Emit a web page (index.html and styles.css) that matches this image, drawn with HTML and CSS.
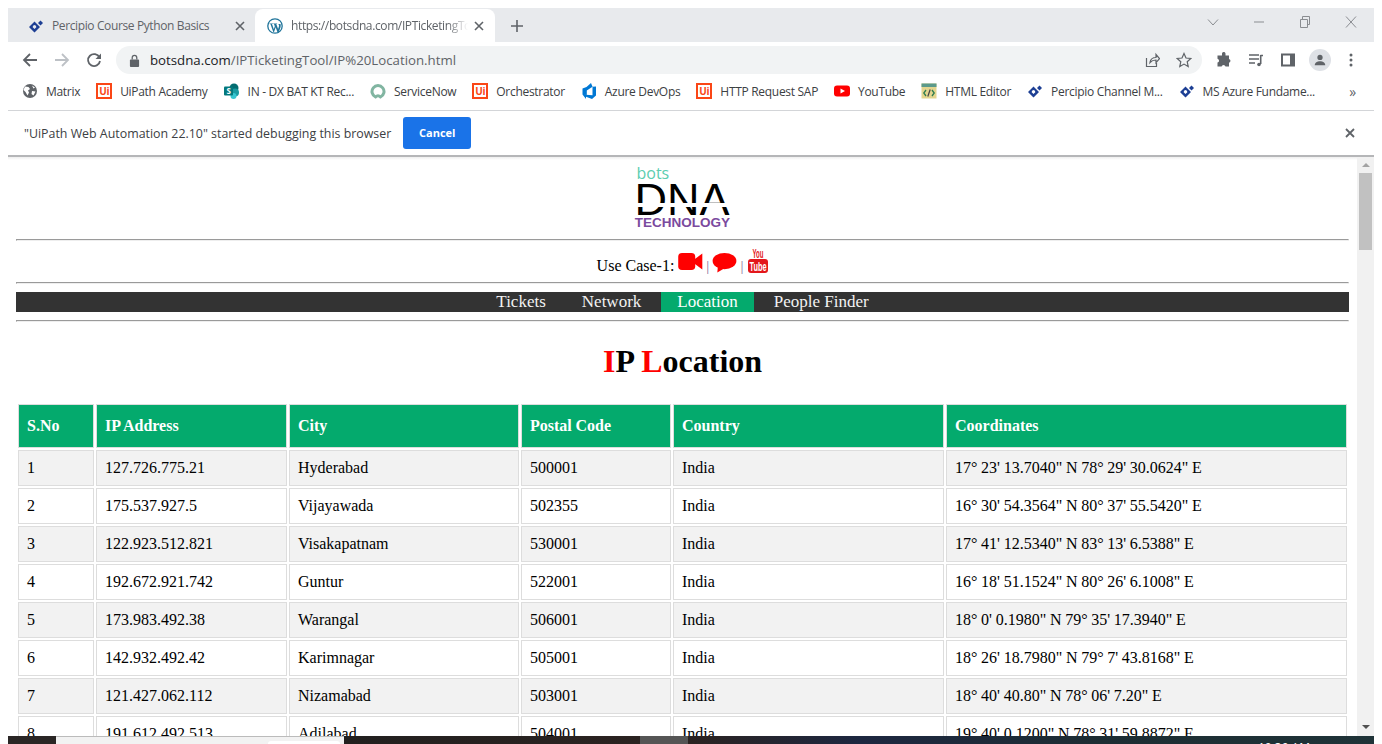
FILE: index.html
```html
<!DOCTYPE html>
<html lang="en">
<head>
    <meta charset="UTF-8">
    <title>IP Location</title>
    <link rel="stylesheet" href="styles.css">
</head>
<body>

<div class="window">

    <!-- browser tabs -->
    <div class="tabstrip">
        <div class="tab">
            <svg class="icon" viewBox="0 0 16 16"><path fill="#1d3f94" d="M6.500 3.500 12 9l-5.500 5.500L1 9zM6.500 7a2 2 0 0 0-1.800 2.200L6.500 11l1.800-1.800A2 2 0 0 0 6.500 7z"/><path fill="#1d3f94" d="M12.500 2.500 15 5l-2.500 2.500L10 5z"/></svg>
            <span class="tab-title">Percipio Course Python Basics</span>
            <svg class="tab-close" viewBox="0 0 10 10"><path d="M1 1l8 8M9 1l-8 8"/></svg>
        </div>
        <div class="tab tab-active">
            <svg class="icon" viewBox="0 0 16 16"><circle cx="8" cy="8" r="7.200" fill="none" stroke="#21759b" stroke-width="1.300"/><path fill="#21759b" d="M2.500 5.500h3.400v.5l-.9.100 1.800 5.100 1-3-.8-2.100-.7-.1v-.5h3.800v.5l-.8.100 1.800 5 .8-2.500c.4-1.300-.2-2-.6-2.600h2.200c.5 1.800.2 3-.4 4.600l-1.700 4.300h-.7L8.700 9.300 7 14.100h-.7L3.400 6.100l-.9-.100z"/></svg>
            <span class="tab-title tab-fade">https://botsdna.com/IPTicketingTool/IP%20Location.html</span>
            <svg class="tab-close" viewBox="0 0 10 10"><path d="M1 1l8 8M9 1l-8 8"/></svg>
        </div>
        <svg class="new-tab" viewBox="0 0 14 14"><path d="M7 1v12M1 7h12"/></svg>
        <div class="window-controls">
            <svg viewBox="0 0 12 12"><path d="M1 3.500 6 9l5-5.500"/></svg>
            <svg viewBox="0 0 12 12"><path d="M1 6h10"/></svg>
            <svg viewBox="0 0 12 12"><path d="M1.500 3.500h7v8h-7zM3.500 3.500v-3h7v8h-2"/></svg>
            <svg viewBox="0 0 12 12"><path d="M1 0.500l10 11M11 0.500l-10 11"/></svg>
        </div>
    </div>

    <!-- address bar -->
    <div class="toolbar">
        <svg class="nav-btn" viewBox="0 0 16 16"><path d="M15 8H2M8 2 2 8l6 6"/></svg>
        <svg class="nav-btn nav-off" viewBox="0 0 16 16"><path d="M1 8h13M8 2l6 6-6 6"/></svg>
        <svg class="nav-btn" viewBox="0 0 16 16"><path d="M13.500 5.500A6 6 0 1 0 14 9"/><path class="solid" d="M15 1.500v5.500H9.500z"/></svg>
        <div class="omnibox">
            <svg class="lock" viewBox="0 0 12 14"><path d="M2 6h8a1 1 0 0 1 1 1v6a1 1 0 0 1-1 1H2a1 1 0 0 1-1-1V7a1 1 0 0 1 1-1z"/><path fill="none" stroke="#5f6368" stroke-width="1.400" d="M3.500 6V4a2.500 2.500 0 0 1 5 0v2"/></svg>
            <span class="url"><b>botsdna.com</b>/IPTicketingTool/IP%20Location.html</span>
            <svg class="omni-icon" viewBox="0 0 16 16"><path d="M2.500 6v8.500h10V11M6 10.500c.5-3.500 3-5 6-5V2.500l3.500 4.200-3.500 4V8c-2.500 0-4.500.8-6 2.500z"/></svg>
            <svg class="omni-icon" viewBox="0 0 16 16"><path d="M8 1.500l2 4.500 4.800.5-3.600 3.200 1 4.800L8 12.100l-4.200 2.400 1-4.800L1.200 6.500 6 6z"/></svg>
        </div>
        <div class="toolbar-right">
            <svg viewBox="0 0 16 16"><path fill="#5f6368" d="M6 1.500a1.800 1.800 0 0 1 3.500 0V3.500h3.500V7a1.900 1.900 0 0 1 0 3.700v3.800H9.500a2 2 0 0 0-3.900 0H1.500v-3.900a2 2 0 0 0 0-3.900V3.500H6z"/></svg>
            <svg viewBox="0 0 16 16"><path fill="none" stroke="#5f6368" stroke-width="1.400" d="M1 3h10M1 7h10M1 11h6"/><path fill="none" stroke="#5f6368" stroke-width="1.600" d="M12.500 3.500h2.500M12.700 3v9"/><circle cx="11" cy="12.500" r="1.800" fill="#5f6368"/></svg>
            <svg viewBox="0 0 16 16"><path fill="#5f6368" d="M1 1.500h14v13H1zM3 3.500v9h7v-9z"/></svg>
            <span class="avatar"><svg viewBox="0 0 16 16"><circle cx="8" cy="5" r="3" fill="#5f6368"/><path fill="#5f6368" d="M2 14c0-3 3-4.500 6-4.500s6 1.500 6 4.500z"/></svg></span>
            <svg viewBox="0 0 16 16"><circle cx="8" cy="3" r="1.500" fill="#5f6368"/><circle cx="8" cy="8" r="1.500" fill="#5f6368"/><circle cx="8" cy="13" r="1.500" fill="#5f6368"/></svg>
        </div>
    </div>

    <!-- bookmarks -->
    <div class="bookmarks">
        <a class="bm"><svg class="icon" viewBox="0 0 16 16"><circle cx="8" cy="8" r="7" fill="#5f6368"/><path fill="#fff" d="M3 3.500l3.500.5 1.500 2-2 1.500 1 2-1.500 3L3.500 9 1.500 7zM10 2.500l3 2-1.500 1zM10 8l3.500.5-2 4-2-1.500z"/></svg>Matrix</a>
        <a class="bm"><span class="ui-logo">Ui</span>UiPath Academy</a>
        <a class="bm"><svg class="icon" viewBox="0 0 16 16"><circle cx="10" cy="5" r="4.500" fill="#036c70"/><circle cx="11" cy="9.500" r="4" fill="#1a9ba1"/><circle cx="9.500" cy="13" r="3" fill="#37c6d0"/><rect x="0" y="3.500" width="9" height="9" rx="1" fill="#03787c"/><text class="sp-letter" x="4.500" y="10.800">S</text></svg>IN - DX BAT KT Rec...</a>
        <a class="bm"><svg class="icon" viewBox="0 0 16 16"><path fill="none" stroke="#81b5a1" stroke-width="3" d="M5.500 14A6 6 0 1 1 10.500 14C9 12.500 7 12.500 5.500 14z"/></svg>ServiceNow</a>
        <a class="bm"><span class="ui-logo">Ui</span>Orchestrator</a>
        <a class="bm"><svg class="icon" viewBox="0 0 16 16"><path fill="#0078d4" d="M15 3.500v9l-4 3.500-6-2.200v2.100L1.500 11.500l10 .8V3.800zM11.500 3.800 5.800 7.500v4.300L1.500 11.500V5.500l4-1.600L10 0z"/></svg>Azure DevOps</a>
        <a class="bm"><span class="ui-logo">Ui</span>HTTP Request SAP</a>
        <a class="bm"><svg class="icon" viewBox="0 0 16 16"><rect x="0" y="2.500" width="16" height="11" rx="3" fill="#f00"/><path fill="#fff" d="M6.500 5.500 11 8l-4.500 2.500z"/></svg>YouTube</a>
        <a class="bm"><svg class="icon" viewBox="0 0 16 16"><rect x="0.500" y="0.500" width="15" height="15" fill="#e3d58e"/><rect x="0.500" y="0.500" width="15" height="3.500" fill="#5b9a8b"/><path fill="none" stroke="#2f7d4f" stroke-width="1.300" d="M5 7 2.800 10 5 13M11 7l2.200 3L11 13"/><path fill="none" stroke="#444" stroke-width="1.200" d="M9.200 6.500 6.800 13.500"/></svg>HTML Editor</a>
        <a class="bm"><svg class="icon" viewBox="0 0 16 16"><path fill="#1d3f94" d="M6.500 3.500 12 9l-5.500 5.500L1 9zM6.500 7a2 2 0 0 0-1.800 2.200L6.500 11l1.800-1.800A2 2 0 0 0 6.500 7z"/><path fill="#1d3f94" d="M12.500 2.500 15 5l-2.500 2.500L10 5z"/></svg>Percipio Channel M...</a>
        <a class="bm"><svg class="icon" viewBox="0 0 16 16"><path fill="#1d3f94" d="M6.500 3.500 12 9l-5.500 5.500L1 9zM6.500 7a2 2 0 0 0-1.800 2.200L6.500 11l1.800-1.800A2 2 0 0 0 6.500 7z"/><path fill="#1d3f94" d="M12.500 2.500 15 5l-2.500 2.500L10 5z"/></svg>MS Azure Fundame...</a>
        <span class="bm-more">»</span>
    </div>

    <!-- debugging infobar -->
    <div class="infobar">
        <span>"UiPath Web Automation 22.10" started debugging this browser</span>
        <button class="cancel-btn">Cancel</button>
        <svg class="infobar-close" viewBox="0 0 10 10"><path d="M1 1l8 8M9 1l-8 8"/></svg>
    </div>

    <div class="viewport">
        <div class="page">
            <div class="logo">
                <div class="logo-bots">bots</div>
                <div class="logo-dna">DNA<span class="logo-cut"></span></div>
                <div class="logo-tech">TECHNOLOGY</div>
            </div>
            <hr>
            <div class="usecase">
                <span class="usecase-label">Use Case-1:</span>
                <svg class="uc-video" viewBox="0 0 26 18"><rect x="0" y="0" width="18" height="18" rx="4" fill="#f00"/><path fill="#f00" d="M17 7 25.500 .5v17L17 11z"/></svg>
                <span class="sep">|</span>
                <svg class="uc-chat" viewBox="0 0 26 21"><ellipse cx="13" cy="8.500" rx="12.500" ry="8.500" fill="#f00"/><path fill="#f00" d="M6 14 5.500 20.500 13 16z"/></svg>
                <span class="sep">|</span>
                <svg class="uc-yt" viewBox="0 0 20 25"><text class="yt-you" x="10" y="10" textLength="11" lengthAdjust="spacingAndGlyphs">You</text><rect x="0" y="11" width="20" height="14" rx="3" fill="#e3171b"/><text class="yt-tube" x="10" y="23" textLength="17" lengthAdjust="spacingAndGlyphs">Tube</text></svg>
            </div>
            <hr>
            <div class="menu">
                <a>Tickets</a>
                <a>Network</a>
                <a class="active">Location</a>
                <a>People Finder</a>
            </div>
            <hr>
            <h1><span class="red">I</span>P <span class="red">L</span>ocation</h1>
            <table>
                <colgroup>
                    <col class="col-sno">
                    <col class="col-ip">
                    <col class="col-city">
                    <col class="col-postal">
                    <col class="col-country">
                    <col class="col-coord">
                </colgroup>
                <tr><th>S.No</th><th>IP Address</th><th>City</th><th>Postal Code</th><th>Country</th><th>Coordinates</th></tr>
                <tr><td>1</td><td>127.726.775.21</td><td>Hyderabad</td><td>500001</td><td>India</td><td>17° 23' 13.7040" N 78° 29' 30.0624" E</td></tr>
                <tr><td>2</td><td>175.537.927.5</td><td>Vijayawada</td><td>502355</td><td>India</td><td>16° 30' 54.3564" N 80° 37' 55.5420" E</td></tr>
                <tr><td>3</td><td>122.923.512.821</td><td>Visakapatnam</td><td>530001</td><td>India</td><td>17° 41' 12.5340" N 83° 13' 6.5388" E</td></tr>
                <tr><td>4</td><td>192.672.921.742</td><td>Guntur</td><td>522001</td><td>India</td><td>16° 18' 51.1524" N 80° 26' 6.1008" E</td></tr>
                <tr><td>5</td><td>173.983.492.38</td><td>Warangal</td><td>506001</td><td>India</td><td>18° 0' 0.1980" N 79° 35' 17.3940" E</td></tr>
                <tr><td>6</td><td>142.932.492.42</td><td>Karimnagar</td><td>505001</td><td>India</td><td>18° 26' 18.7980" N 79° 7' 43.8168" E</td></tr>
                <tr><td>7</td><td>121.427.062.112</td><td>Nizamabad</td><td>503001</td><td>India</td><td>18° 40' 40.80" N 78° 06' 7.20" E</td></tr>
                <tr><td>8</td><td>191.612.492.513</td><td>Adilabad</td><td>504001</td><td>India</td><td>19° 40' 0.1200" N 78° 31' 59.8872" E</td></tr>
            </table>
        </div>
        <div class="scrollbar">
            <span class="arrow-up"></span>
            <span class="thumb"></span>
            <span class="arrow-down"></span>
        </div>
    </div>

    <!-- windows taskbar, mostly cut off -->
    <div class="taskbar">
        <span class="task-start"></span>
        <span class="task-search"><span class="task-search-inner"></span></span>
        <span class="task-dark"></span>
        <span class="task-app"></span>
        <span class="task-rest"><span class="task-clock">10:39 AM</span></span>
    </div>

</div>

</body>
</html>
```
FILE: styles.css
```css
html, body {
    margin: 0;
    height: 100%;
    background-color: #fff;
    overflow: hidden;
}

.window {
    box-sizing: border-box;
    height: 744px;
    padding: 8px 8px 0 8px;
    display: flex;
    flex-direction: column;
    font-family: 'Open Sans', sans-serif;
}

.icon {
    width: 16px;
    height: 16px;
    flex: none;
}

/* tabs */
.tabstrip {
    height: 34px;
    flex: none;
    background-color: #e8eaed;
    display: flex;
    align-items: flex-end;
    padding-left: 8px;
}

.tab {
    box-sizing: border-box;
    width: 239px;
    height: 33px;
    display: flex;
    align-items: center;
    padding: 0 10px 0 12px;
    font-size: 12px;
    color: #5f6368;
}

.tab-active {
    width: 240px;
    padding-right: 11px;
    background-color: #fff;
    border-radius: 8px 8px 0 0;
    color: #5f6368;
}

.tab-title {
    margin-left: 8px;
    flex: 1;
    white-space: nowrap;
    overflow: hidden;
    letter-spacing: -0.38px;
}

.tab-fade {
    -webkit-mask-image: linear-gradient(to right, #000 88%, transparent 100%);
    mask-image: linear-gradient(to right, #000 88%, transparent 100%);
}

.tab-close {
    width: 10px;
    height: 10px;
    margin-left: 6px;
    flex: none;
    fill: none;
    stroke: #5f6368;
    stroke-width: 1.600;
}

.new-tab {
    width: 14px;
    height: 14px;
    margin: 0 0 9px 15px;
    flex: none;
    fill: none;
    stroke: #5f6368;
    stroke-width: 1.600;
}

.window-controls {
    margin-left: auto;
    align-self: center;
    display: flex;
    gap: 34px;
    padding-right: 17px;
    margin-top: -6px;
}

.window-controls svg {
    width: 12px;
    height: 12px;
    fill: none;
    stroke: #8a8d91;
    stroke-width: 1;
}

/* address bar */
.toolbar {
    height: 32px;
    flex: none;
    display: flex;
    align-items: flex-end;
    padding-left: 14px;
}

.nav-btn {
    width: 16px;
    height: 16px;
    margin: 0 16px 6px 0;
    flex: none;
    fill: none;
    stroke: #5f6368;
    stroke-width: 1.800;
}

.nav-btn .solid {
    fill: #5f6368;
    stroke: none;
}

.nav-off {
    stroke: #bdc1c6;
}

.omnibox {
    box-sizing: border-box;
    width: 1086px;
    height: 28px;
    margin-left: -2px;
    background-color: #f1f3f4;
    border-radius: 14px;
    display: flex;
    align-items: center;
    padding: 0 10px 0 13px;
}

.lock {
    width: 11px;
    height: 13px;
    fill: #5f6368;
    flex: none;
}

.url {
    margin-left: 10px;
    flex: 1;
    font-size: 13.25px;
    color: #5f6368;
    white-space: nowrap;
}

.url b {
    font-weight: normal;
    color: #202124;
}

.omni-icon {
    width: 16px;
    height: 16px;
    margin-left: 16px;
    fill: none;
    stroke: #5f6368;
    stroke-width: 1.200;
    flex: none;
}

.toolbar-right {
    display: flex;
    align-items: center;
    gap: 16px;
    height: 28px;
    margin-left: 14px;
}

.toolbar-right svg {
    width: 16px;
    height: 16px;
    flex: none;
}

.avatar {
    width: 22px;
    height: 22px;
    margin: 0 -4px 0 -3px;
    border-radius: 50%;
    background-color: #dee1e6;
    display: flex;
    align-items: center;
    justify-content: center;
}

.avatar svg {
    width: 14px;
    height: 14px;
}

/* bookmarks */
.bookmarks {
    height: 37px;
    flex: none;
    box-sizing: border-box;
    border-bottom: 1px solid #d3d5d8;
    display: flex;
    align-items: center;
    padding: 0 0 2px 14px;
    gap: 16px;
    font-size: 12px;
    letter-spacing: -0.3px;
    color: #3c4043;
    position: relative;
}

.bm {
    display: flex;
    align-items: center;
    gap: 8px;
    white-space: nowrap;
}

.ui-logo {
    box-sizing: border-box;
    width: 16px;
    height: 16px;
    flex: none;
    border: 2px solid #fa4616;
    color: #fa4616;
    font: bold 10px/12px 'Open Sans', sans-serif;
    text-align: center;
}

.sp-letter {
    font: bold 8px 'Open Sans', sans-serif;
    fill: #fff;
    text-anchor: middle;
}

.bm-more {
    margin-left: auto;
    padding-right: 18px;
    font-size: 14px;
    color: #5f6368;
}

/* infobar */
.infobar {
    height: 46px;
    flex: none;
    box-sizing: border-box;
    display: flex;
    align-items: center;
    padding: 0 19px 0 16px;
    font-size: 12.4px;
    color: #3c4043;
    border-bottom: 2px solid #b5b6b8;
}

.cancel-btn {
    box-sizing: border-box;
    width: 68px;
    height: 32px;
    margin-left: 12px;
    padding-bottom: 2px;
    border: 0;
    border-radius: 3px;
    background-color: #1a73e8;
    color: #fff;
    font: bold 11px 'Open Sans', sans-serif;
}

.infobar-close {
    width: 10px;
    height: 10px;
    margin-left: auto;
    fill: none;
    stroke: #5f6368;
    stroke-width: 1.800;
}

/* page */
.viewport {
    flex: 1;
    min-height: 0;
    display: flex;
    overflow: hidden;
}

.page {
    flex: 1;
    min-width: 0;
    padding: 6px 8px 0 8px;
    font-family: 'Liberation Serif', serif;
    font-size: 16px;
    color: #000;
    overflow: hidden;
    background: linear-gradient(to bottom, #eee, #fff 3px);
}

.logo {
    width: 98px;
    height: 68px;
    margin: 0 auto;
    display: flex;
    flex-direction: column;
}

.logo-bots {
    height: 20px;
    margin-left: 3px;
    font: 16px/20px 'Open Sans', sans-serif;
    color: #5bcdb0;
}

.logo-dna {
    height: 33px;
    margin-left: 1px;
    font: 45px/33px 'Liberation Sans', sans-serif;
    color: #000;
    position: relative;
}

.logo-cut {
    position: absolute;
    left: 0;
    right: 0;
    top: 20px;
    height: 4px;
    background-color: #fff;
}

.logo-tech {
    font: bold 13.5px/13px 'Liberation Sans', sans-serif;
    color: #7b4a9e;
    text-align: center;
}

hr {
    margin: 8px 0;
}

.usecase {
    height: 25px;
    display: flex;
    justify-content: center;
    align-items: flex-end;
}

.usecase-label {
    line-height: 17px;
    margin-right: 4px;
}

.sep {
    color: #8a6a9a;
    font-size: 15px;
    line-height: 16px;
    margin: 0 3px;
}

.uc-video {
    width: 25px;
    height: 17px;
    margin-bottom: 4px;
}

.uc-chat {
    width: 25px;
    height: 20px;
    margin-bottom: 1px;
}

.uc-yt {
    width: 20px;
    height: 25px;
    margin: 0 0 1px 2px;
}

.yt-you {
    font: bold 12px 'Liberation Sans', sans-serif;
    fill: #e3171b;
    text-anchor: middle;
}

.yt-tube {
    font: bold 13px 'Liberation Sans', sans-serif;
    fill: #fff;
    text-anchor: middle;
}

.menu {
    background-color: #333;
    height: 20px;
    display: flex;
    justify-content: center;
    gap: 4px;
    font-size: 17px;
    line-height: 20px;
    color: #f2f2f2;
}

.menu a {
    padding: 0 16px;
}

.menu .active {
    background-color: #04aa6d;
    color: #fff;
}

h1 {
    margin: 21px 0 22px 0;
    text-align: center;
    font-size: 32px;
    line-height: 37px;
}

.red {
    color: #f00;
}

table {
    width: 1333px;
    table-layout: fixed;
    border-spacing: 2px;
    border-collapse: separate;
}

.col-sno { width: 76px; }
.col-ip { width: 191px; }
.col-city { width: 230px; }
.col-postal { width: 150px; }
.col-country { width: 271px; }

th, td {
    box-sizing: border-box;
    border: 1px solid #ddd;
    padding: 8px;
    line-height: 18px;
    text-align: left;
    white-space: nowrap;
    word-spacing: -0.3px;
}

th {
    padding: 12px 8px;
    background-color: #04aa6d;
    color: #fff;
}

tr:nth-child(even) td {
    background-color: #f2f2f2;
}

.scrollbar {
    width: 17px;
    flex: none;
    background-color: #f1f1f1;
    display: flex;
    flex-direction: column;
    align-items: center;
    padding: 6px 0 7px 0;
    box-sizing: border-box;
}

.arrow-up, .arrow-down {
    width: 0;
    height: 0;
    flex: none;
    border-left: 4px solid transparent;
    border-right: 4px solid transparent;
}

.arrow-up {
    border-bottom: 4px solid #a3a3a3;
}

.arrow-down {
    margin-top: auto;
    border-top: 4px solid #505050;
}

.thumb {
    width: 13px;
    height: 77px;
    margin-top: 6px;
    flex: none;
    background-color: #c1c1c1;
}

/* taskbar */
.taskbar {
    height: 8px;
    flex: none;
    display: flex;
    overflow: hidden;
}

.taskbar > span {
    flex: none;
}

.task-start {
    width: 48px;
    background-color: #2a2625;
}

.task-search {
    box-sizing: border-box;
    width: 288px;
    background-color: #f2f2f2;
    border-top: 1px solid #bbb;
    padding: 4px 0 0 212px;
}

.task-search-inner {
    display: block;
    width: 72px;
    height: 4px;
    background-color: #fff;
    border-radius: 3px 3px 0 0;
}

.task-dark {
    width: 296px;
    background: linear-gradient(to right, #22201f, #2b2321);
}

.task-app {
    width: 48px;
    background-color: #555;
}

.task-rest {
    flex: 1 !important;
    background: linear-gradient(to right, #2b2321, #1d2740 25%, #1d2d33 60%, #1f3338);
    text-align: right;
    padding-right: 64px;
    font-size: 12px;
    line-height: 14px;
    color: #fff;
}

.task-clock {
    display: block;
    margin-top: 5px;
}
```
